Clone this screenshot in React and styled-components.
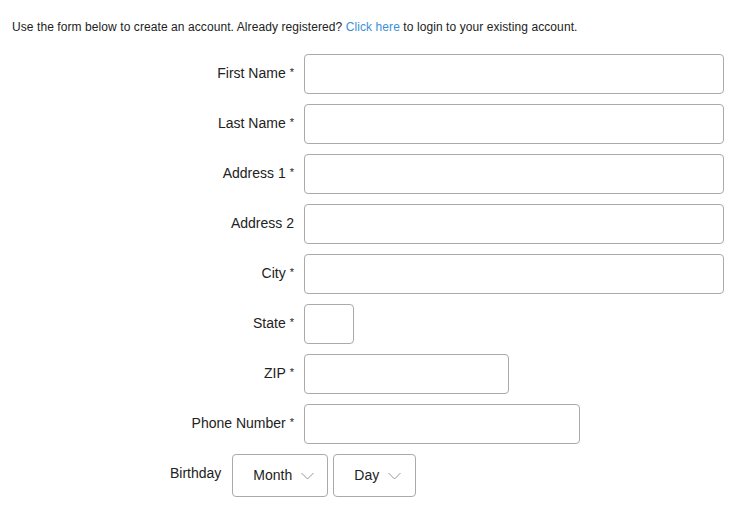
import styled, { createGlobalStyle } from 'styled-components'

const GlobalStyle = createGlobalStyle`
  body {
    margin: 0;
    background: #fff;
    font-family: "Liberation Sans", Arial, sans-serif;
    color: #222;
  }
`

const fields = [
  { label: 'First Name', required: true, width: 420 },
  { label: 'Last Name', required: true, width: 420 },
  { label: 'Address 1', required: true, width: 420 },
  { label: 'Address 2', required: false, width: 420 },
  { label: 'City', required: true, width: 420 },
  { label: 'State', required: true, width: 50 },
  { label: 'ZIP', required: true, width: 205 },
  { label: 'Phone Number', required: true, width: 276 },
]

function Chevron() {
  return (
    <svg width="13" height="8" viewBox="0 0 13 8" fill="none">
      <path d="M0.5 1 L6.5 7 L12.5 1" stroke="#999" strokeWidth="1" />
    </svg>
  )
}

export default function App() {
  return (
    <Page>
      <GlobalStyle />
      <Intro>
        Use the form below to create an account. Already registered?{' '}
        <Link href="#">Click here</Link> to login to your existing account.
      </Intro>
      <Form>
        {fields.map((f) => (
          <Row key={f.label}>
            <Label>
              {f.label}
              {f.required && <Star>*</Star>}
            </Label>
            <Input $width={f.width} />
          </Row>
        ))}
        <BirthdayRow>
          <BirthdayLabel>Birthday</BirthdayLabel>
          <Select $width={96} $pl={20}>
            Month <Chevron />
          </Select>
          <Select $width={83} $pl={20}>
            Day <Chevron />
          </Select>
        </BirthdayRow>
      </Form>
    </Page>
  )
}

const Page = styled.div`
  padding: 20px 0 0;
`

const Intro = styled.p`
  margin: 0 0 19px 12px;
  font-size: 12px;
  line-height: 15px;
  letter-spacing: 0.08px;
  color: #222;
`

const Link = styled.a`
  color: #3d8fd8;
  text-decoration: none;
`

const Form = styled.form`
  display: flex;
  flex-direction: column;
  gap: 10px;
`

const Row = styled.div`
  display: flex;
  align-items: center;
  gap: 10px;
  height: 40px;
`

const Label = styled.label`
  width: 294px;
  padding-bottom: 2px;
  text-align: right;
  font-size: 14px;
  color: #222;
`

const Star = styled.span`
  font-size: 11px;
  margin-left: 4px;
  vertical-align: 2px;
`

const Input = styled.div`
  box-sizing: border-box;
  width: ${(p) => p.$width}px;
  height: 40px;
  border: 1px solid #aaa;
  border-radius: 4px;
  background: #fff;
`

const BirthdayRow = styled.div`
  display: flex;
  align-items: center;
  gap: 5px;
  padding-left: 170px;
`

const BirthdayLabel = styled.span`
  font-size: 14px;
  color: #222;
  margin-right: 6px;
  position: relative;
  top: -3px;
`

const Select = styled.div`
  box-sizing: border-box;
  width: ${(p) => p.$width}px;
  height: 43px;
  padding-left: ${(p) => p.$pl}px;
  padding-bottom: 1px;
  border: 1px solid #aaa;
  border-radius: 4px;
  display: flex;
  align-items: center;
  gap: 9px;
  font-size: 14px;
  color: #222;
  svg {
    margin-top: 2px;
  }
`
